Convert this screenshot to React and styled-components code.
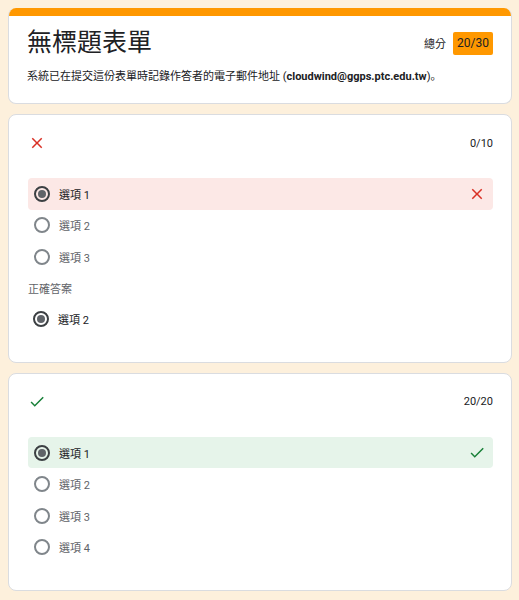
import React from "react";
import styled, { createGlobalStyle } from "styled-components";

const Global = createGlobalStyle`
  html, body { margin: 0; padding: 0; background: #fdf0dc; }
  body { font-family: Roboto, "Noto Sans CJK TC", "Noto Sans", sans-serif; color: #202124; }
`;

const Page = styled.div`
  padding: 8px 7px 8px 8px;
  display: flex;
  flex-direction: column;
  gap: 10px;
  width: 504px;
`;

const Card = styled.div`
  background: #fff;
  border: 1px solid #dadce0;
  border-radius: 8px;
  overflow: hidden;
  box-sizing: border-box;
`;

const HeaderCard = styled(Card)`
  border-top: none;
`;

const AccentBar = styled.div`
  height: 8px;
  background: #ff9800;
`;

const HeaderBody = styled.div`
  padding: 15px 18px 18px 18px;
`;

const TitleRow = styled.div`
  display: flex;
  align-items: center;
  justify-content: space-between;
  height: 24px;
`;

const Title = styled.h1`
  margin: 0;
  font-size: 25px;
  font-weight: 400;
  line-height: 24px;
  color: #202124;
`;

const Total = styled.div`
  display: flex;
  align-items: center;
  gap: 7px;
  font-size: 11px;
`;

const Badge = styled.span`
  background: #ff9800;
  border-radius: 2px;
  height: 23px;
  padding: 0 4px;
  display: flex;
  align-items: center;
  font-size: 12px;
  color: #202124;
`;

const Note = styled.p`
  margin: 14px 0 0;
  font-family: Roboto, "Noto Sans CJK JP", "Noto Sans CJK TC", sans-serif;
  font-size: 11px;
  line-height: 16px;
  color: #202124;
  b { font-weight: 700; }
`;

const QBody = styled.div`
  padding: 16px 18px 27px 19px;
`;

const QHeader = styled.div`
  display: flex;
  align-items: center;
  justify-content: space-between;
  height: 24px;
  margin-bottom: 23px;
`;

const Score = styled.span`
  font-size: 11px;
  color: #202124;
`;

const IconBox = styled.span`
  width: 18px;
  height: 18px;
  display: flex;
  align-items: center;
  justify-content: center;
  color: ${(p) => (p.$ok ? "#188038" : "#d93025")};
`;

const Option = styled.div`
  display: flex;
  align-items: center;
  height: 31.5px;
  padding: 0 7px 0 ${(p) => (p.$indent ?? 6)}px;
  border-radius: 4px;
  background: ${(p) =>
    p.$state === "wrong" ? "#fce8e6" : p.$state === "right" ? "#e6f4ea" : "transparent"};
`;

const Radio = styled.span`
  width: 16px;
  height: 16px;
  box-sizing: border-box;
  border-radius: 50%;
  border: 2px solid ${(p) => (p.$checked ? "#3c4043" : "#80868b")};
  display: flex;
  align-items: center;
  justify-content: center;
  flex-shrink: 0;
  &::after {
    content: "";
    display: ${(p) => (p.$checked ? "block" : "none")};
    width: 8px;
    height: 8px;
    border-radius: 50%;
    background: #5f6368;
  }
`;

const Label = styled.span`
  margin-left: 9px;
  font-size: 11px;
  flex: 1;
  color: ${(p) => (p.$checked ? "#202124" : "#5f6368")};
`;

const SectionLabel = styled.div`
  margin-top: 9.5px;
  margin-bottom: 5.25px;
  font-size: 11px;
  line-height: 16px;
  color: #5f6368;
`;

const CloseIcon = () => (
  <svg width="18" height="18" viewBox="0 0 24 24" fill="currentColor">
    <path d="M19 6.41L17.59 5 12 10.59 6.41 5 5 6.41 10.59 12 5 17.59 6.41 19 12 13.41 17.59 19 19 17.59 13.41 12z" />
  </svg>
);

const CheckIcon = () => (
  <svg width="19" height="19" viewBox="0 0 24 24" fill="currentColor">
    <path d="M9 16.17L4.83 12l-1.42 1.41L9 19 21 7l-1.41-1.41z" />
  </svg>
);

const Mark = ({ ok }) => <IconBox $ok={ok}>{ok ? <CheckIcon /> : <CloseIcon />}</IconBox>;

const OptionRow = ({ label, checked, state, indent }) => (
  <Option $state={state} $indent={indent}>
    <Radio $checked={checked} />
    <Label $checked={checked}>{label}</Label>
    {state === "wrong" && <Mark ok={false} />}
    {state === "right" && <Mark ok />}
  </Option>
);

export default function App() {
  return (
    <>
      <Global />
      <Page>
        <HeaderCard>
          <AccentBar />
          <HeaderBody>
            <TitleRow>
              <Title>無標題表單</Title>
              <Total>
                總分
                <Badge>20/30</Badge>
              </Total>
            </TitleRow>
            <Note>
              系統已在提交這份表單時記錄作答者的電子郵件地址 (<b>cloudwind@ggps.ptc.edu.tw</b>)。
            </Note>
          </HeaderBody>
        </HeaderCard>

        <Card>
          <QBody>
            <QHeader>
              <Mark ok={false} />
              <Score>0/10</Score>
            </QHeader>
            <OptionRow label="選項 1" checked state="wrong" />
            <OptionRow label="選項 2" />
            <OptionRow label="選項 3" />
            <SectionLabel>正確答案</SectionLabel>
            <OptionRow label="選項 2" checked indent={5} />
          </QBody>
        </Card>

        <Card>
          <QBody>
            <QHeader>
              <Mark ok />
              <Score>20/20</Score>
            </QHeader>
            <OptionRow label="選項 1" checked state="right" />
            <OptionRow label="選項 2" />
            <OptionRow label="選項 3" />
            <OptionRow label="選項 4" />
          </QBody>
        </Card>
      </Page>
    </>
  );
}
